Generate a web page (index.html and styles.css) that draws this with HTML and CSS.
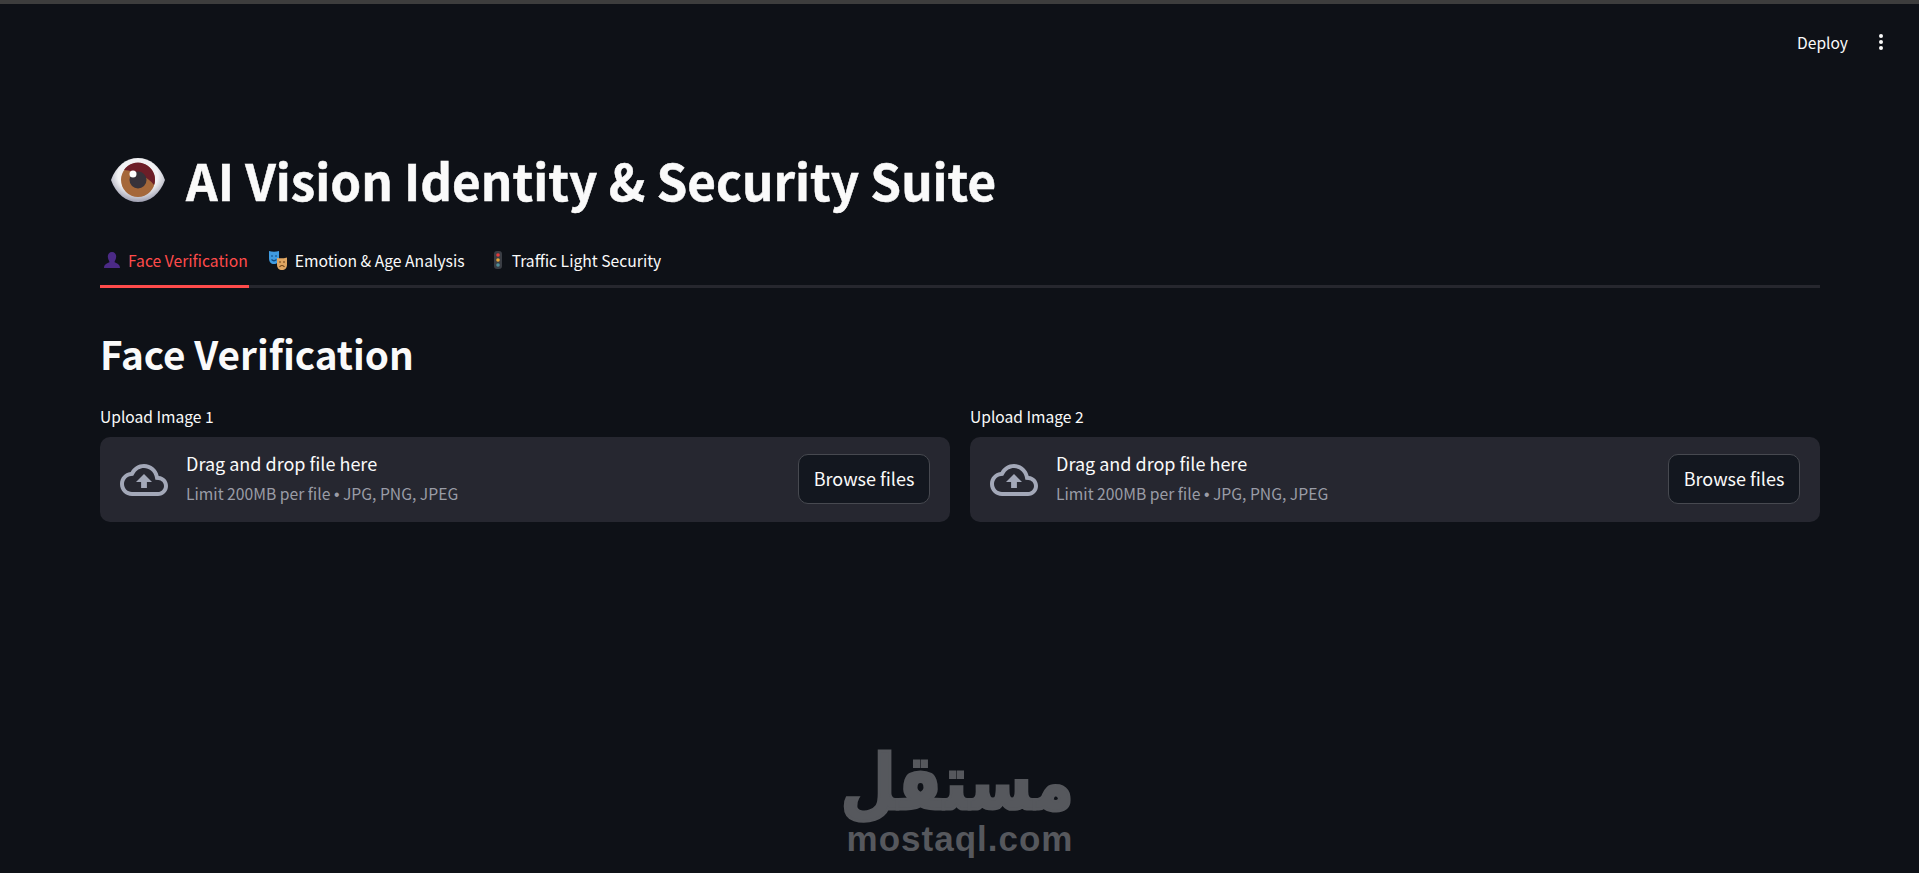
FILE: index.html
```html
<!DOCTYPE html>
<html lang="en">
<head>
<meta charset="UTF-8">
<title>AI Vision Identity &amp; Security Suite</title>
<link rel="stylesheet" href="styles.css">
</head>
<body>

<div class="toolbar">
    <span class="deploy">Deploy</span>
    <svg class="menu-dots" width="6" height="18" viewBox="0 0 6 18"><circle cx="3" cy="3" r="2"/><circle cx="3" cy="9" r="2"/><circle cx="3" cy="15" r="2"/></svg>
</div>

<div class="main">
    <div class="page-title">
        <svg class="eye" width="54" height="44" viewBox="0 0 54 44">
            <defs>
                <radialGradient id="white" cx="50%" cy="40%" r="62%"><stop offset="60%" stop-color="#f2f2f4"/><stop offset="100%" stop-color="#9495a8"/></radialGradient>
            </defs>
            <path d="M0 22C5 8 15 0 27 0c12 0 22 8 27 22-5 14-15 22-27 22C15 44 5 36 0 22z" fill="url(#white)"/>
            <circle cx="27" cy="22" r="17" fill="#a5683a"/>
            <path d="M13 12A17 17 0 0 1 44 22c0 2-.4 4-1 5-6-8-18-14-30-15z" fill="#6d1e28"/>
            <circle cx="27" cy="22" r="8.500" fill="#37323a"/>
            <circle cx="22" cy="16" r="3.500" fill="#fff"/>
        </svg>
        <h1>AI Vision Identity &amp; Security Suite</h1>
    </div>

    <div class="tabs">
        <div class="tab active">
            <svg width="18" height="18" viewBox="0 0 18 18"><path d="M9 1c2.800 0 4.200 2.200 4.200 4.600S11.800 10 11.500 11c1 1.200 5.500 1.500 5.500 6H1c0-4.500 4.500-4.800 5.500-6C6.200 10 4.800 8 4.800 5.600S6.200 1 9 1z" fill="#4b2a86"/></svg>
            <span>Face Verification</span>
        </div>
        <div class="tab">
            <svg width="20" height="20" viewBox="0 0 20 20">
                <path d="M1 1c3 1 7 1 10 0v7c0 4-2 6-5 6S1 12 1 8z" fill="#3f9be0"/>
                <path d="M3 6h2M7 6h2M3.500 9.500c1.500 1.500 3.500 1.500 5 0" stroke="#0e4a80" stroke-width="1.200" fill="none"/>
                <path d="M9 8c3 .6 7 .4 10-.6v7c0 3.600-2 5.600-5 5.600s-5-2-5-5.600z" fill="#dfa662"/>
                <path d="M11 12h2M15 12h2M11.500 17c1.500-2 3.500-2 5 0" stroke="#6b3f14" stroke-width="1.200" fill="none"/>
            </svg>
            <span>Emotion &amp; Age Analysis</span>
        </div>
        <div class="tab">
            <svg width="14" height="20" viewBox="0 0 14 20">
                <rect x="3" y="1" width="8" height="18" rx="3" fill="#3a3d44"/>
                <circle cx="7" cy="5" r="1.800" fill="#e0383a"/>
                <circle cx="7" cy="10" r="1.800" fill="#e8a83a"/>
                <circle cx="7" cy="15" r="1.800" fill="#4f8f9a"/>
            </svg>
            <span>Traffic Light Security</span>
        </div>
    </div>

    <h2 class="section-title">Face Verification</h2>

    <div class="uploads">
        <div class="upload">
            <label class="upload-label">Upload Image 1</label>
            <div class="dropzone">
                <svg class="cloud" width="48" height="48" viewBox="0 0 24 24"><path d="M19.350 10.040C18.670 6.590 15.640 4 12 4 9.110 4 6.600 5.640 5.350 8.040 2.340 8.360 0 10.910 0 14c0 3.310 2.690 6 6 6h13c2.760 0 5-2.240 5-5 0-2.640-2.050-4.780-4.650-4.960zM19 18H6c-2.210 0-4-1.790-4-4 0-2.050 1.530-3.760 3.560-3.970l1.070-.11.500-.95C8.080 7.140 9.940 6 12 6c2.620 0 4.880 1.860 5.390 4.430l.3 1.500 1.530.11c1.560.1 2.780 1.410 2.780 2.960 0 1.650-1.350 3-3 3zM8 13h2.550v3h2.900v-3H16l-4-4z"/></svg>
                <div class="drop-text">
                    <div class="drop-main">Drag and drop file here</div>
                    <div class="drop-limit">Limit 200MB per file <span class="dot">•</span> JPG, PNG, JPEG</div>
                </div>
                <button class="browse">Browse files</button>
            </div>
        </div>
        <div class="upload">
            <label class="upload-label">Upload Image 2</label>
            <div class="dropzone">
                <svg class="cloud" width="48" height="48" viewBox="0 0 24 24"><path d="M19.350 10.040C18.670 6.590 15.640 4 12 4 9.110 4 6.600 5.640 5.350 8.040 2.340 8.360 0 10.910 0 14c0 3.310 2.690 6 6 6h13c2.760 0 5-2.240 5-5 0-2.640-2.050-4.780-4.650-4.960zM19 18H6c-2.210 0-4-1.790-4-4 0-2.050 1.530-3.760 3.560-3.970l1.070-.11.500-.95C8.080 7.140 9.940 6 12 6c2.620 0 4.880 1.860 5.390 4.430l.3 1.500 1.530.11c1.560.1 2.780 1.410 2.780 2.960 0 1.650-1.350 3-3 3zM8 13h2.550v3h2.900v-3H16l-4-4z"/></svg>
                <div class="drop-text">
                    <div class="drop-main">Drag and drop file here</div>
                    <div class="drop-limit">Limit 200MB per file <span class="dot">•</span> JPG, PNG, JPEG</div>
                </div>
                <button class="browse">Browse files</button>
            </div>
        </div>
    </div>
</div>

<!-- watermark -->
<div class="watermark">
    <div class="wm-arabic" lang="ar" dir="rtl">مستقل</div>
    <div class="wm-latin">mostaql.com</div>
</div>

</body>
</html>
```

FILE: styles.css
```css
html, body {
    height: 100%;
}

body {
    margin: 0;
    background-color: #0e1117;
    color: #fafafa;
    font-family: "Noto Sans CJK SC", "Open Sans", sans-serif;
    border-top: 4px solid #3d3d3d;
    box-sizing: border-box;
    overflow: hidden;
    position: relative;
}

.toolbar {
    display: flex;
    justify-content: flex-end;
    align-items: center;
    gap: 30px;
    height: 75px;
    padding-right: 35px;
}

.deploy {
    font-size: 15.6px;
    line-height: 24px;
}

.menu-dots {
    fill: #fafafa;
}

.main {
    padding: 0 99px 0 100px;
}

.page-title {
    display: flex;
    align-items: center;
    gap: 21px;
    padding: 65px 0 0 11px;
}

h1 {
    margin: 0;
    font-size: 49.4px;
    font-weight: 700;
    line-height: 72px;
    -webkit-text-stroke: 0.5px #fafafa;
}

.tabs {
    display: flex;
    gap: 16px;
    margin-top: 19px;
    border-bottom: 3px solid #26272e;
    height: 50px;
}

.tab {
    display: flex;
    align-items: center;
    gap: 7px;
    font-size: 15.7px;
    padding: 0 1px 0 3px;
    height: 50px;
}

.tab + .tab + .tab {
    margin-left: 6px;
}

.tab.active {
    color: #ff4b4b;
    border-bottom: 3px solid #ff4b4b;
}

.section-title {
    margin: 37px 0 0;
    font-size: 38.7px;
    font-weight: 600;
    line-height: 56px;
}

.uploads {
    display: grid;
    grid-template-columns: 1fr 1fr;
    gap: 20px;
    margin-top: 23px;
}

.upload-label {
    display: block;
    font-size: 15.6px;
    line-height: 24px;
    margin-bottom: 9px;
}

.dropzone {
    display: flex;
    align-items: center;
    height: 85px;
    padding: 0 20px;
    background-color: #262730;
    border-radius: 10px;
    box-sizing: border-box;
}

.cloud {
    fill: #a3a8b8;
    margin-right: 18px;
}

.drop-text {
    flex: 1;
    padding-bottom: 3px;
}

.drop-main {
    font-size: 18px;
    line-height: 28px;
}

.drop-limit {
    font-size: 15.7px;
    line-height: 24px;
    color: #9a9ca6;
    margin-top: 5px;
}

.dot {
    font-family: "Liberation Sans", sans-serif;
}

.browse {
    width: 132px;
    height: 50px;
    margin-bottom: 2px;
    padding-bottom: 3px;
    background-color: #13171f;
    color: #fafafa;
    border: 1px solid #474950;
    border-radius: 10px;
    font-family: inherit;
    font-size: 18px;
}

.watermark {
    position: absolute;
    left: 846px;
    top: 741px;
    width: 228px;
    color: #56585d;
    text-align: center;
}

.wm-arabic {
    font-family: "DejaVu Sans", sans-serif;
    font-weight: 700;
    font-size: 76px;
    line-height: 76px;
    -webkit-text-stroke: 3px #56585d;
    transform: scaleX(0.84);
    transform-origin: right center;
}

.wm-latin {
    font-family: "Liberation Sans", sans-serif;
    font-weight: 700;
    font-size: 35px;
    line-height: 36px;
    letter-spacing: 1px;
}
```
